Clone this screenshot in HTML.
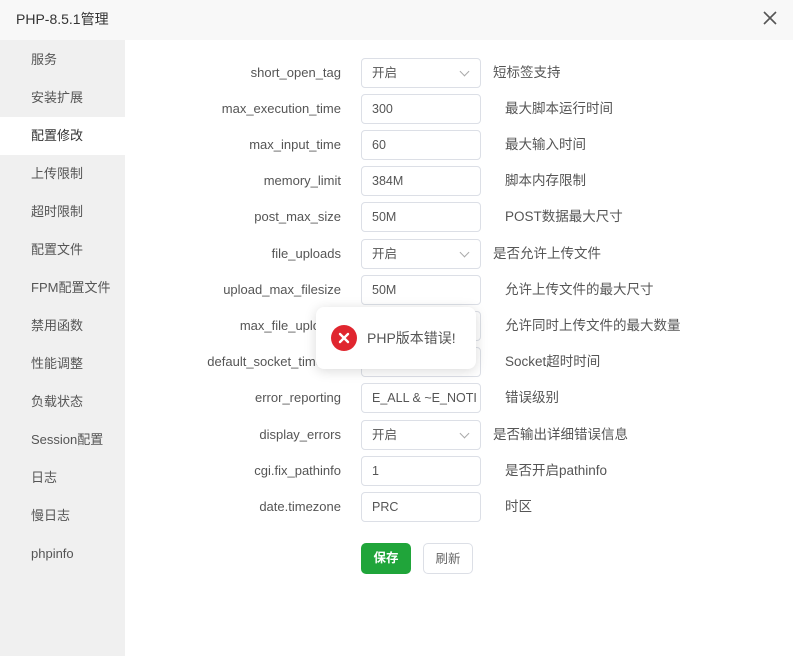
<!DOCTYPE html>
<html><head><meta charset="utf-8"><style>
*{margin:0;padding:0;box-sizing:border-box}
body{width:793px;height:656px;overflow:hidden;background:#fff;font-family:"Liberation Sans","Noto Sans CJK SC",sans-serif;color:#333;position:relative}
.hd{position:absolute;left:0;top:0;width:793px;height:40px;background:#f8f8f8;font-size:14px;line-height:38px;padding-left:16px;color:#333}
.x{position:absolute;right:16px;top:11px;width:14px;height:14px}
.sb{position:absolute;left:0;top:40px;width:125px;height:616px;background:#f0f0f0;padding-top:1px}
.sb div{height:38px;line-height:38px;padding-left:31px;font-size:13px;color:#555}
.sb .a{background:#fff;color:#333}
.row{position:absolute;left:125px;width:668px;height:30px;font-size:13px}
.lb{position:absolute;right:452px;top:0;line-height:30px;color:#555;white-space:nowrap}
.in{position:absolute;left:236px;top:0;width:120px;height:30px;border:1px solid #dcdfe6;border-radius:4px;line-height:28px;padding-left:10px;color:#555;font-size:12.5px;overflow:hidden;white-space:nowrap}
.in span{display:block;width:104px;overflow:hidden}
.in i{position:absolute;right:12px;top:9px;width:7px;height:7px;border-right:1px solid #aaa;border-bottom:1px solid #aaa;transform:rotate(45deg)}
.ds{position:absolute;left:380px;line-height:30px;color:#555;font-size:13.5px;white-space:nowrap}
.ds.s{left:368px}
.btn{position:absolute;top:543px;height:31px;width:50px;border-radius:5px;font-size:12.5px;text-align:center;line-height:30px}
.toast{position:absolute;left:316px;top:307px;width:160px;height:62px;background:#fff;border-radius:8px;box-shadow:0 2px 12px rgba(0,0,0,.15)}
</style></head><body>
<div class="hd">PHP-8.5.1管理<svg class="x" viewBox="0 0 14 14"><path d="M1 1L13 13M13 1L1 13" stroke="#555" stroke-width="1.6"/></svg></div>
<div class="sb">
<div>服务</div><div>安装扩展</div><div class="a">配置修改</div><div>上传限制</div><div>超时限制</div><div>配置文件</div><div>FPM配置文件</div><div>禁用函数</div><div>性能调整</div><div>负载状态</div><div>Session配置</div><div>日志</div><div>慢日志</div><div>phpinfo</div>
</div>
<div class="row" style="top:58px"><span class="lb">short_open_tag</span><div class="in">开启<i></i></div><span class="ds s">短标签支持</span></div>
<div class="row" style="top:94px"><span class="lb">max_execution_time</span><div class="in">300</div><span class="ds">最大脚本运行时间</span></div>
<div class="row" style="top:130px"><span class="lb">max_input_time</span><div class="in">60</div><span class="ds">最大输入时间</span></div>
<div class="row" style="top:166px"><span class="lb">memory_limit</span><div class="in">384M</div><span class="ds">脚本内存限制</span></div>
<div class="row" style="top:202px"><span class="lb">post_max_size</span><div class="in">50M</div><span class="ds">POST数据最大尺寸</span></div>
<div class="row" style="top:239px"><span class="lb">file_uploads</span><div class="in">开启<i></i></div><span class="ds s">是否允许上传文件</span></div>
<div class="row" style="top:275px"><span class="lb">upload_max_filesize</span><div class="in">50M</div><span class="ds">允许上传文件的最大尺寸</span></div>
<div class="row" style="top:311px"><span class="lb">max_file_uploads</span><div class="in">20</div><span class="ds">允许同时上传文件的最大数量</span></div>
<div class="row" style="top:347px"><span class="lb">default_socket_timeout</span><div class="in">60</div><span class="ds">Socket超时时间</span></div>
<div class="row" style="top:383px"><span class="lb">error_reporting</span><div class="in"><span>E_ALL &amp; ~E_NOTICE</span></div><span class="ds">错误级别</span></div>
<div class="row" style="top:420px"><span class="lb">display_errors</span><div class="in">开启<i></i></div><span class="ds s">是否输出详细错误信息</span></div>
<div class="row" style="top:456px"><span class="lb">cgi.fix_pathinfo</span><div class="in">1</div><span class="ds">是否开启pathinfo</span></div>
<div class="row" style="top:492px"><span class="lb">date.timezone</span><div class="in">PRC</div><span class="ds">时区</span></div>
<div class="btn" style="left:361px;background:#20a53a;color:#fff;font-weight:bold">保存</div>
<div class="btn" style="left:423px;border:1px solid #dcdfe6;color:#666">刷新</div>
<div class="toast"><svg style="position:absolute;left:15px;top:18px" width="26" height="26" viewBox="0 0 26 26"><circle cx="13" cy="13" r="13" fill="#e0262f"/><path d="M9 9L17 17M17 9L9 17" stroke="#fff" stroke-width="2.4" stroke-linecap="round"/></svg><span style="position:absolute;left:51px;top:21px;font-size:14px;color:#555">PHP版本错误!</span></div>
</body></html>
